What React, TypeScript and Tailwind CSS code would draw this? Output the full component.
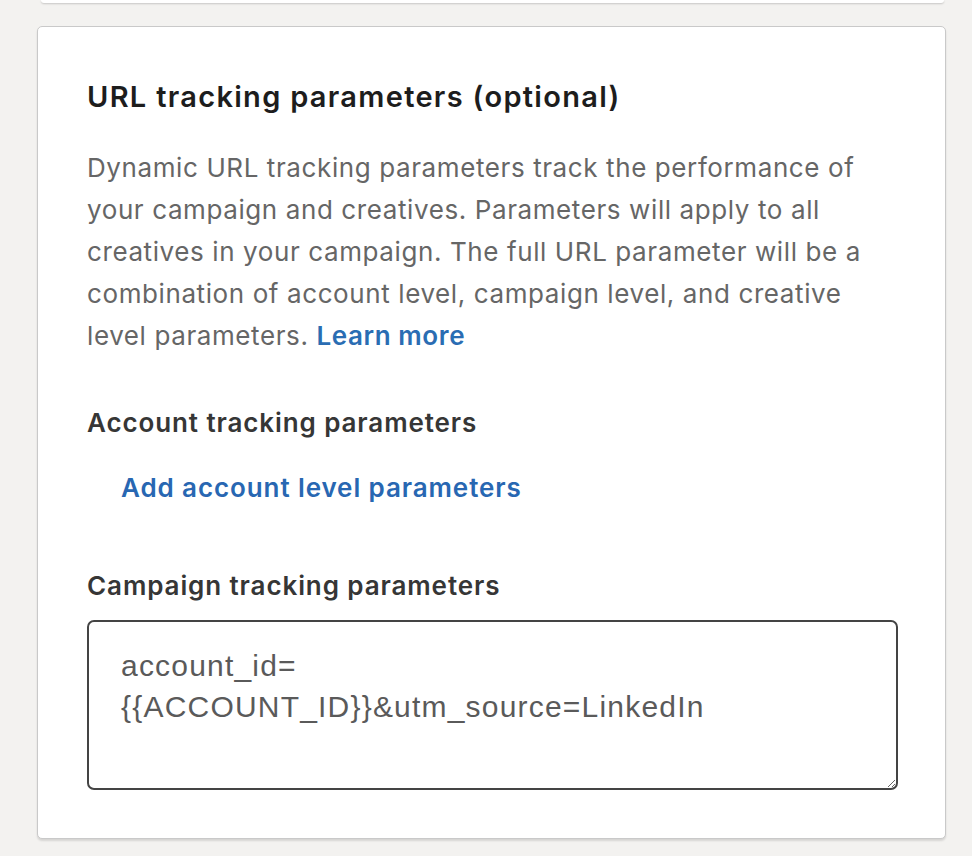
export default function App() {
  return (
    <div className="min-h-[856px] w-full overflow-hidden bg-[#f3f2f0]" style={{ fontFamily: 'Inter, "Liberation Sans", Arial, sans-serif' }}>
      {/* bottom edge of previous card */}
      <div className="ml-[41px] h-[3px] w-[903px] rounded-b-[4px] bg-white shadow-[0_1px_2px_rgba(0,0,0,0.18)]" />

      <div className="ml-[37px] mt-[23px] w-[909px] rounded-[5px] border border-[#c9c9c9] bg-white px-[49px] pb-[48px] pt-[50px] shadow-[0_2px_2px_rgba(0,0,0,0.12)]">
        <h2 className="text-[29px] font-semibold leading-[40px] tracking-[1.3px] text-[#1d1d1d]">URL tracking parameters (optional)</h2>

        <p className="mt-[30px] w-[805px] text-[26px] leading-[42px] tracking-[0.6px] text-[#666666]">
          Dynamic URL tracking parameters track the performance of your campaign and creatives. Parameters will apply to all
          creatives in your campaign. The full URL parameter will be a combination of account level, campaign level, and
          creative level parameters. <a className="font-semibold text-[#2a6db3]">Learn more</a>
        </p>

        <h3 className="mt-[49px] text-[26px] font-semibold leading-[34px] tracking-[0.9px] text-[#363636]">Account tracking parameters</h3>

        <div className="mt-[31px] pl-[34px]">
          <button type="button" className="text-[26px] font-semibold leading-[34px] tracking-[0.9px] text-[#2867b2]">
            Add account level parameters
          </button>
        </div>

        <h3 className="mt-[64px] text-[26px] font-semibold leading-[34px] tracking-[0.9px] text-[#363636]">Campaign tracking parameters</h3>

        <textarea
          className="mt-[17px] block h-[170px] w-[811px] resize-y rounded-[7px] border-2 border-[#444444] px-[32px] pt-[23px] text-[30px] leading-[41px] tracking-[1.2px] text-[#5a5a5a] outline-none"
          style={{ fontFamily: '"Liberation Sans", Arial, sans-serif' }}
          defaultValue={'account_id=\n{{ACCOUNT_ID}}&utm_source=LinkedIn'}
        />
      </div>
    </div>
  );
}
